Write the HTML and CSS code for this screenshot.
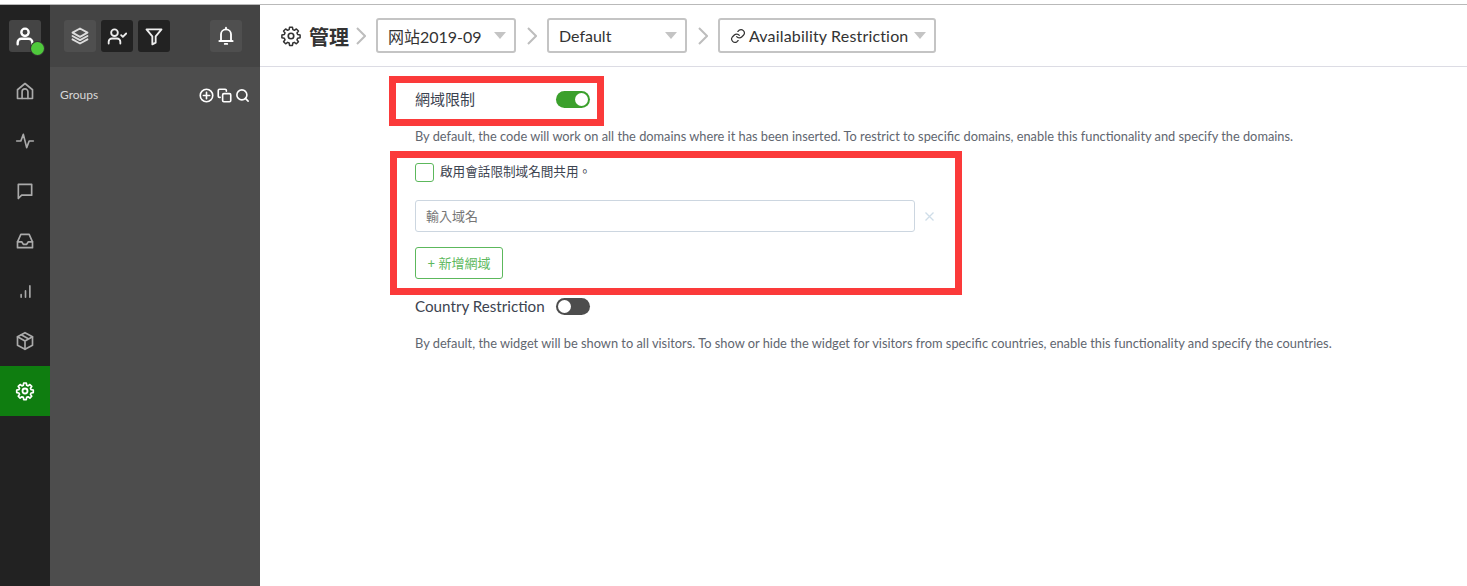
FILE: index.html
```html
<!DOCTYPE html>
<html lang="zh-Hant">
<head>
  <meta charset="UTF-8">
  <title>管理</title>
  <link rel="stylesheet" href="styles.css">
</head>
<body>
  <div class="app">
    <nav class="rail">
      <div class="avatar">
        <svg class="ico" viewBox="0 0 24 24"><circle cx="12" cy="8" r="4"/><path d="M4 21v-2a4 4 0 0 1 4-4h8a4 4 0 0 1 4 4v2"/></svg>
        <span class="online"></span>
      </div>
      <a class="rail-item"><svg class="ico" viewBox="0 0 24 24"><path d="M3 10.500 12 3l9 7.500V21H3z"/><path d="M8.500 21v-8a3.500 3.500 0 0 1 7 0v8"/></svg></a>
      <a class="rail-item"><svg class="ico" viewBox="0 0 24 24"><path d="M2 12h5l3-8 4 16 3-8h5"/></svg></a>
      <a class="rail-item"><svg class="ico" viewBox="0 0 24 24"><path d="M4 4h16v13H8l-4 4z"/></svg></a>
      <a class="rail-item"><svg class="ico" viewBox="0 0 24 24"><path d="M7 4h10l4 9v7H3v-7z"/><path d="M3 13h5l2 3h4l2-3h5"/></svg></a>
      <a class="rail-item"><svg class="ico small" viewBox="0 0 24 24"><path d="M5 21v-4M12 21V11M19 21V3"/></svg></a>
      <a class="rail-item"><svg class="ico" viewBox="0 0 24 24"><path d="m12 2 9 5v10l-9 5-9-5V7z"/><path d="m3 7 9 5 9-5M12 12v10M7.500 4.500l9 5"/></svg></a>
      <a class="rail-item active"><svg class="ico" viewBox="0 0 24 24"><circle cx="12" cy="12" r="3"/><path d="M10.300 2.500h3.400l.5 2.900 1.800.8 2.400-1.700 2.400 2.400-1.700 2.400.8 1.800 2.900.5v3.400l-2.900.5-.8 1.800 1.700 2.400-2.400 2.400-2.400-1.700-1.800.8-.5 2.900h-3.400l-.5-2.900-1.800-.8-2.400 1.700-2.400-2.400 1.700-2.400-.8-1.800-2.900-.5v-3.400l2.900-.5.800-1.800-1.700-2.400 2.400-2.400 2.400 1.700 1.800-.8z" transform="translate(12 12) scale(.92) translate(-12 -12.900)"/></svg></a>
    </nav>

    <aside class="panel">
      <div class="panel-head">
        <span class="tool"><svg class="ico" viewBox="0 0 24 24"><path d="m12 3 9 5-9 5-9-5z"/><path d="m3 12 9 5 9-5M3 16l9 5 9-5"/></svg></span>
        <span class="tool dark"><svg class="ico" viewBox="0 0 24 24"><circle cx="9" cy="8" r="4"/><path d="M2 21v-2a4 4 0 0 1 4-4h6a4 4 0 0 1 4 4v2M17 11l2 2 4-4"/></svg></span>
        <span class="tool dark"><svg class="ico" viewBox="0 0 24 24"><path d="M3 4h18l-7 8.500V20l-4 2v-9.500z"/></svg></span>
        <span class="tool bell"><svg class="ico" viewBox="0 0 24 24"><path d="M6 17V10a6 6 0 0 1 12 0v7l2 1H4z"/><path d="M12 2v2M10.500 21.500h3"/></svg></span>
      </div>
      <div class="groups">
        <span>Groups</span>
        <span class="group-icons">
          <svg class="ico" viewBox="0 0 24 24"><circle cx="12" cy="12" r="10"/><path d="M12 7v10M7 12h10"/></svg>
          <svg class="ico" viewBox="0 0 24 24"><rect x="9" y="9" width="13" height="13" rx="2"/><path d="M5 15H4a2 2 0 0 1-2-2V4a2 2 0 0 1 2-2h9a2 2 0 0 1 2 2v1"/></svg>
          <svg class="ico" viewBox="0 0 24 24"><circle cx="11" cy="11" r="8"/><path d="m21 21-4.300-4.300"/></svg>
        </span>
      </div>
    </aside>

    <main class="main">
      <header class="crumbs">
        <svg class="ico page-ico" viewBox="0 0 24 24"><circle cx="12" cy="12" r="3"/><path d="M10.300 2.500h3.400l.5 2.900 1.800.8 2.400-1.700 2.400 2.400-1.700 2.400.8 1.800 2.900.5v3.400l-2.900.5-.8 1.800 1.700 2.400-2.400 2.400-2.400-1.700-1.800.8-.5 2.900h-3.400l-.5-2.900-1.800-.8-2.400 1.700-2.400-2.400 1.700-2.400-.8-1.800-2.900-.5v-3.400l2.900-.5.800-1.800-1.700-2.400 2.400-2.400 2.400 1.700 1.800-.8z" transform="translate(12 12) scale(.92) translate(-12 -12.900)"/></svg>
        <h1>管理</h1>
        <svg class="chev first" viewBox="0 0 10 18"><path d="m1 1 8 8-8 8"/></svg>
        <div class="select w-site"><span>网站2019-09</span><i class="caret"></i></div>
        <svg class="chev" viewBox="0 0 10 18"><path d="m1 1 8 8-8 8"/></svg>
        <div class="select w-default"><span>Default</span><i class="caret"></i></div>
        <svg class="chev" viewBox="0 0 10 18"><path d="m1 1 8 8-8 8"/></svg>
        <div class="select w-avail">
          <svg class="ico link-ico" viewBox="0 0 24 24"><path d="M10 13a5 5 0 0 0 7.500.5l3-3a5 5 0 0 0-7-7l-1.700 1.700"/><path d="M14 11a5 5 0 0 0-7.500-.5l-3 3a5 5 0 0 0 7 7l1.700-1.700"/></svg>
          <span class="avail-text">Availability Restriction</span><i class="caret"></i>
        </div>
      </header>

      <section class="content">
        <div class="setting-row first-row">
          <span>網域限制</span>
          <span class="switch on"><i></i></span>
        </div>
        <p class="hint">By default, the code will work on all the domains where it has been inserted. To restrict to specific domains, enable this functionality and specify the domains.</p>

        <label class="check"><span class="box"></span><span class="check-text">啟用會話限制域名間共用。</span></label>
        <div class="domain-row">
          <div class="domain-input">輸入域名</div>
          <svg class="clear" viewBox="0 0 9 9"><path d="m.5.500 8 8M8.500.500l-8 8"/></svg>
        </div>
        <button class="add-btn">+ 新增網域</button>

        <div class="setting-row country-row">
          <span>Country Restriction</span>
          <span class="switch"><i></i></span>
        </div>
        <p class="hint country-hint">By default, the widget will be shown to all visitors. To show or hide the widget for visitors from specific countries, enable this functionality and specify the countries.</p>
      </section>
    </main>
  </div>

  <div class="mark mark-a"></div>
  <div class="mark mark-b"></div>
</body>
</html>
```

FILE: styles.css
```css
* {
  box-sizing: border-box;
}
html, body {
  height: 100%;
}
body {
  margin: 0;
  padding-top: 4px;
  background: #fff;
  font-family: Lato, "Noto Sans CJK TC", sans-serif;
  color: #3c4350;
  overflow: hidden;
}
.app {
  display: flex;
  height: 582px;
  border-top: 1px solid #b9b9b9;
}
.ico {
  fill: none;
  stroke: currentColor;
  stroke-width: 2.2;
  stroke-linecap: round;
  stroke-linejoin: round;
  width: 18px;
  height: 18px;
}

/* left rail */
.rail {
  width: 50px;
  flex: none;
  background: #222;
  color: #aaa;
}
.avatar {
  position: relative;
  width: 32px;
  height: 32px;
  margin: 15px 9px 14px;
  border-radius: 3px;
  background: #444;
  color: #fff;
  display: flex;
  align-items: center;
  justify-content: center;
}
.avatar .ico {
  width: 22px;
  height: 22px;
  stroke-width: 2.6;
}
.online {
  position: absolute;
  right: -3px;
  bottom: -3px;
  width: 13px;
  height: 13px;
  border-radius: 50%;
  background: #4fc83c;
  box-shadow: 0 0 0 1px #333;
}
.rail-item {
  display: flex;
  align-items: center;
  justify-content: center;
  height: 50px;
}
.rail-item .ico {
  width: 20px;
  height: 20px;
  stroke-width: 2;
}
.rail-item .ico.small {
  width: 15px;
  height: 15px;
  stroke-width: 2.6;
}
.rail-item.active {
  background: #0f7d10;
  color: #fff;
}
.rail-item.active .ico {
  stroke-width: 2.2;
}

/* groups panel */
.panel {
  width: 210px;
  flex: none;
  background: #4d4d4d;
  color: #d8d8d8;
}
.panel-head {
  height: 62px;
  background: #444;
  display: flex;
  gap: 5px;
  padding: 15px 0 0 14px;
}
.tool {
  width: 32px;
  height: 32px;
  border-radius: 3px;
  background: #4f4f4f;
  color: #ddd;
  display: flex;
  align-items: center;
  justify-content: center;
}
.tool .ico {
  width: 20px;
  height: 20px;
}
.tool.dark {
  background: #222;
  color: #eee;
}
.tool.bell {
  margin-left: 35px;
  color: #fff;
}
.groups {
  display: flex;
  justify-content: space-between;
  align-items: center;
  padding: 20px 10px 0 10px;
  font-size: 12px;
  line-height: 16px;
}
.group-icons {
  display: flex;
  gap: 3px;
  color: #fff;
}
.group-icons .ico {
  width: 15px;
  height: 15px;
  stroke-width: 2.6;
}

/* main */
.main {
  flex: 1;
  min-width: 0;
}
.crumbs {
  height: 62px;
  border-bottom: 1px solid #dcdce4;
  display: flex;
  align-items: center;
  padding: 0 0 0 20px;
  color: #333;
}
.page-ico {
  width: 22px;
  height: 22px;
  color: #333;
  stroke-width: 1.8;
}
h1 {
  font-size: 20px;
  font-weight: 700;
  margin: 1px 0 0 7px;
  color: #333;
}
.chev {
  width: 10px;
  height: 18px;
  margin: 0 10px 0 11px;
  fill: none;
  stroke: #bdbdbd;
  stroke-width: 2;
}
.chev.first {
  margin: 0 10px 0 7px;
}
.select {
  height: 35px;
  border: 2px solid #c4c4c4;
  border-radius: 3px;
  display: flex;
  align-items: center;
  padding: 0 8px 0 10px;
  font-size: 16px;
  color: #333;
}
.select span {
  flex: 1;
  white-space: nowrap;
}
.w-site {
  width: 140px;
}
.w-default {
  width: 140px;
}
.w-avail {
  width: 218px;
}
.avail-text {
  letter-spacing: .17px;
}
.link-ico {
  width: 16px;
  height: 16px;
  margin-right: 3px;
  stroke-width: 1.8;
}
.caret {
  flex: none;
  width: 0;
  height: 0;
  border-left: 6px solid transparent;
  border-right: 6px solid transparent;
  border-top: 7px solid #c4c4c4;
}

/* content */
.content {
  padding-left: 155px;
}
.setting-row {
  display: flex;
  align-items: center;
  font-size: 15px;
  line-height: 20px;
  color: #3c4350;
}
.first-row {
  margin-top: 22px;
  gap: 81px;
}
.switch {
  width: 34px;
  height: 17px;
  border-radius: 9px;
  background: #4d4d4d;
  display: flex;
  align-items: center;
  padding: 0 2px;
}
.switch i {
  width: 13px;
  height: 13px;
  border-radius: 50%;
  background: #fff;
}
.switch.on {
  background: #3ba02c;
  justify-content: flex-end;
}
.hint {
  margin: 18px 0 0;
  font-size: 12.8px;
  line-height: 18px;
  color: #61666f;
  white-space: nowrap;
}
.check {
  display: flex;
  align-items: center;
  gap: 6px;
  margin-top: 18px;
  font-family: Lato, "Noto Sans CJK SC", sans-serif;
  font-size: 12.6px;
  line-height: 18px;
  color: #3c4350;
}
.check-text {
  margin-top: -2px;
}
.box {
  width: 19px;
  height: 19px;
  border: 1px solid #5cb85c;
  border-radius: 3px;
}
.domain-row {
  display: flex;
  align-items: center;
  margin-top: 18px;
}
.domain-input {
  width: 500px;
  height: 32px;
  border: 1px solid #ccd6e0;
  border-radius: 3px;
  padding: 0 10px;
  font-size: 13px;
  line-height: 30px;
  color: #757575;
}
.clear {
  width: 9px;
  height: 9px;
  margin-left: 10px;
  fill: none;
  stroke: #cfdde8;
  stroke-width: 1.3;
}
.add-btn {
  display: block;
  width: 88px;
  height: 32px;
  margin-top: 15px;
  border: 1px solid #5cb85c;
  border-radius: 3px;
  background: #fff;
  padding: 0 0 2px;
  font-family: inherit;
  font-size: 13px;
  color: #5cb85c;
}
.country-row {
  margin-top: 17px;
  gap: 11px;
  font-size: 15.2px;
}
.country-hint {
  margin-top: 18px;
  font-size: 12.83px;
}

/* red marks drawn over the screenshot */
.mark {
  position: absolute;
  border: 7px solid #fb3a3a;
  pointer-events: none;
}
.mark-a {
  left: 389px;
  top: 76px;
  width: 215px;
  height: 50px;
}
.mark-b {
  left: 390px;
  top: 151px;
  width: 572px;
  height: 144px;
}
```
